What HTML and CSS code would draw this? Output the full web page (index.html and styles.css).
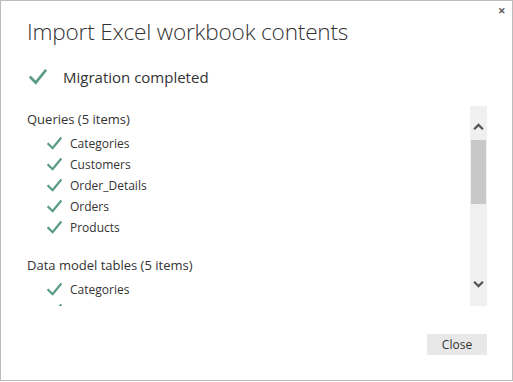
FILE: index.html
```html
<!DOCTYPE html>
<html lang="en">
<head>
    <meta charset="UTF-8">
    <title>Import Excel workbook contents</title>
    <link rel="stylesheet" href="styles.css">
</head>
<body>
    <div class="dialog">
        <span class="close-x">&#x2715;</span>
        <h1 class="title">Import Excel workbook contents</h1>

        <div class="status">
            <svg class="check big" viewBox="0 0 16 16"><path d="M1.5 8.5 L6 13 L14.5 2.5" /></svg>
            <span>Migration completed</span>
        </div>

        <div class="content">
            <div class="list">
                <div class="group">Queries (5 items)</div>
                <div class="item"><svg class="check" viewBox="0 0 16 16"><path d="M1.5 8.5 L6 13 L14.5 2.5" /></svg>Categories</div>
                <div class="item"><svg class="check" viewBox="0 0 16 16"><path d="M1.5 8.5 L6 13 L14.5 2.5" /></svg>Customers</div>
                <div class="item"><svg class="check" viewBox="0 0 16 16"><path d="M1.5 8.5 L6 13 L14.5 2.5" /></svg>Order_Details</div>
                <div class="item"><svg class="check" viewBox="0 0 16 16"><path d="M1.5 8.5 L6 13 L14.5 2.5" /></svg>Orders</div>
                <div class="item"><svg class="check" viewBox="0 0 16 16"><path d="M1.5 8.5 L6 13 L14.5 2.5" /></svg>Products</div>

                <div class="group second">Data model tables (5 items)</div>
                <div class="item"><svg class="check" viewBox="0 0 16 16"><path d="M1.5 8.5 L6 13 L14.5 2.5" /></svg>Categories</div>
                <div class="item"><svg class="check" viewBox="0 0 16 16"><path d="M1.5 8.5 L6 13 L14.5 2.5" /></svg>Customers</div>
            </div>
            <div class="scrollbar">
                <svg class="arrow" viewBox="0 0 10 6"><path d="M1 5.5 L5 1.5 L9 5.5" /></svg>
                <div class="track"><div class="thumb"></div></div>
                <svg class="arrow" viewBox="0 0 10 6"><path d="M1 0.5 L5 4.5 L9 0.5" /></svg>
            </div>
        </div>

        <div class="footer">
            <button class="btn">Close</button>
        </div>
    </div>
</body>
</html>
```

FILE: styles.css
```css
html, body{
    margin: 0;
    background: #fff;
}
body{
    font-family: "Open Sans", "Noto Sans", sans-serif;
    color: #333;
}
.dialog{
    position: relative;
    box-sizing: border-box;
    width: 513px;
    height: 381px;
    border: 1px solid #bcbcbc;
    padding: 0 25px 0 26px;
}
.close-x{
    position: absolute;
    top: 3px;
    right: 6px;
    font-size: 9px;
    color: #555;
    font-weight: bold;
}
.title{
    margin: 0;
    padding-top: 15px;
    font-size: 22.6px;
    font-weight: 300;
    line-height: 32px;
    color: #333;
    letter-spacing: -0.2px;
}
.status{
    display: flex;
    align-items: center;
    margin-top: 17px;
    font-size: 15px;
    height: 24px;
}
.check{
    fill: none;
    stroke: #5a9b87;
    stroke-width: 2.4;
    stroke-linecap: square;
}
.check.big{
    width: 18px;
    height: 18px;
    margin: 0 16px 0 2px;
}
.content{
    display: flex;
    margin-top: 17px;
    height: 200px;
}
.list{
    flex: 1;
    overflow: hidden;
    font-size: 12px;
}
.group{
    font-size: 13px;
    height: 21px;
    line-height: 21px;
    margin: 3px 0 3px;
}
.group.second{
    margin-top: 17px;
}
.item{
    display: flex;
    align-items: center;
    height: 21px;
    padding-left: 20px;
}
.item .check{
    width: 15px;
    height: 15px;
    margin-right: 8px;
}
.scrollbar{
    width: 17px;
    background: #f0f0f0;
    display: flex;
    flex-direction: column;
    align-items: center;
}
.arrow{
    width: 11px;
    height: 7px;
    margin: 17px 0 10px;
    fill: none;
    stroke: #555;
    stroke-width: 2;
}
.arrow:last-child{
    margin: 12px 0 18px;
}
.track{
    flex: 1;
    width: 100%;
}
.thumb{
    background: #c8c8c8;
    width: 15px;
    margin: 0 auto;
    height: 64px;
}
.footer{
    display: flex;
    justify-content: flex-end;
    margin-top: 28px;
}
.btn{
    width: 60px;
    height: 21px;
    border: none;
    outline: none;
    background: #e8e8e8;
    font-family: inherit;
    font-size: 12px;
    color: #333;
    padding: 0;
}
```
